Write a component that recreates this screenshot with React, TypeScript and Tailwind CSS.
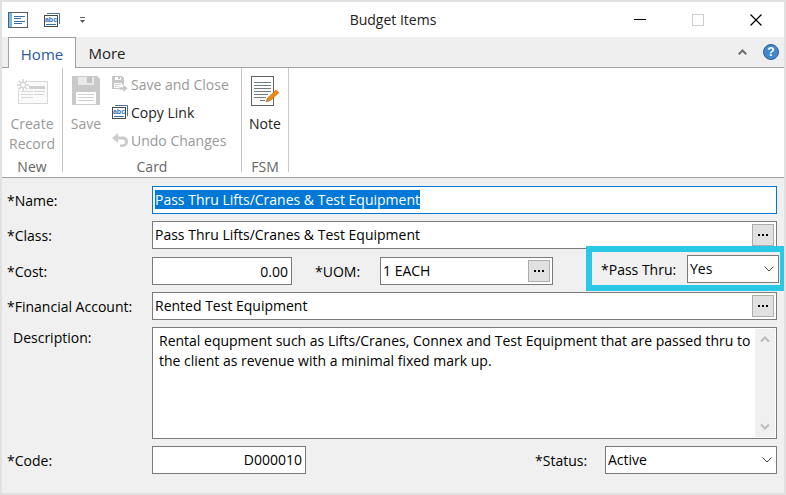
import { useEffect, useRef } from "react";
import type { ReactNode } from "react";

const field = "h-7 min-w-0 border border-[#7a7a7a] bg-white leading-5 text-black outline-none";

const FormIcon = () => (
  <svg width="20" height="16" viewBox="0 0 20 16" aria-hidden="true">
    <rect x="0.5" y="0.5" width="19" height="15" fill="#fff" stroke="#5e5e5e" />
    <rect x="1" y="1" width="3" height="14" fill="#74bfdf" />
    <path d="M6 4.5h11M6 6.5h7M6 9.5h11M6 11.5h8" stroke="#3a6ea5" />
  </svg>
);

const AbcIcon = () => (
  <svg width="16" height="14" viewBox="0 0 16 14" aria-hidden="true">
    <path d="M3 0.5h12.5V11" fill="none" stroke="#4d7297" />
    <rect x="0.5" y="2.5" width="13" height="11" fill="#fff" stroke="#484848" />
    <text x="7" y="9" textAnchor="middle" fontSize="7" fontWeight="700" fontFamily="Liberation Sans, sans-serif" fill="#2f6fb5">abc</text>
    <path d="M2 11.5h10" stroke="#2f6fb5" />
  </svg>
);

const NewRecordIcon = () => (
  <svg width="32" height="30" viewBox="0 0 32 30" aria-hidden="true">
    <rect x="2.5" y="5.5" width="29" height="22" fill="#fafafa" stroke="#d8d8d8" />
    <rect x="13" y="10" width="16" height="3" fill="#d0d0d0" />
    <path d="M5 15.5h12M18 15.5h11M5 18.5h12M18 18.5h10M5 21.5h12" stroke="#d6d6d6" />
    <circle cx="7" cy="9" r="6" fill="#fff" />
    <path d="M7 3v12M1 9h12M2.8 4.8l8.4 8.4M11.2 4.8l-8.4 8.4" stroke="#d2d2d2" strokeWidth="1.5" />
    <circle cx="7" cy="9" r="2.5" fill="#fff" stroke="#d2d2d2" />
  </svg>
);

const SaveIcon = () => (
  <svg width="28" height="30" viewBox="0 0 28 30" aria-hidden="true">
    <path d="M0 0h25l3 3v26H0z" fill="#c9c9c9" />
    <rect x="6" y="1" width="16" height="8" fill="#e9e9e9" />
    <rect x="15" y="1" width="5" height="6" fill="#c4c4c4" />
    <rect x="4" y="16" width="20" height="12" fill="#fff" />
    <path d="M6 18.5h16M6 21.5h16M6 24.5h16" stroke="#cfcfcf" />
  </svg>
);

const SaveCloseIcon = () => (
  <svg width="16" height="16" viewBox="0 0 16 16" aria-hidden="true">
    <path d="M0 0h10l2 2v7H9v4H0z" fill="#c6c6c6" />
    <rect x="3" y="1" width="6" height="3" fill="#fff" />
    <rect x="6" y="1" width="2" height="2" fill="#c6c6c6" />
    <rect x="2" y="7" width="8" height="5" fill="#fff" />
    <path d="M3 8.5h6M3 10.5h4" stroke="#cfcfcf" />
    <path d="M7 11h4V8l5 4.5-5 3.5v-2H7z" fill="#c6c6c6" stroke="#fff" strokeWidth="0.5" />
  </svg>
);

const UndoIcon = () => (
  <svg width="16" height="14" viewBox="0 0 16 14" aria-hidden="true">
    <path d="M0 5l6-5v3.5h4.5c3.500 0 5.500 2 5.500 5S14 14 10 14H8v-2.500h2c2 0 3-1 3-2.500s-1-2.500-3-2.500H6V10z" fill="#cbcbcb" />
  </svg>
);

const NoteIcon = () => (
  <svg width="28" height="30" viewBox="0 0 28 30" aria-hidden="true">
    <rect x="0.5" y="0.5" width="22" height="29" fill="#fdfdfd" stroke="#5d6366" />
    <path d="M3 6.5h17M3 9.5h17M3 12.5h17M3 15.5h17M3 18.5h14M3 21.5h12M9 24.5h5" stroke="#6f7e80" />
    <path d="M15 26l1.500-4 8.500-8 3 2.500-8.500 8z" fill="#f08c0a" stroke="#a85f10" strokeWidth="0.5" />
    <path d="M15 26l1.500-4 2.500 2.500z" fill="#b98a55" />
  </svg>
);

const Chevron = () => (
  <svg className="pointer-events-none absolute right-[5px] top-[11px]" width="10" height="6" viewBox="0 0 10 6" fill="none" aria-hidden="true">
    <path d="M0.5 0.5L5 5l4.5-4.5" stroke="#444" />
  </svg>
);

const ScrollArrow = ({ d }: { d: string }) => (
  <svg width="10" height="8" viewBox="0 0 10 8" fill="none" aria-hidden="true">
    <path d={d} stroke="#bdbdbd" strokeWidth="2" />
  </svg>
);

const Group = ({ label, className, children }: { label: string; className: string; children: ReactNode }) => (
  <div className={`flex h-[104px] flex-col border-r border-[#c6c6c6] pt-[2px] ${className}`}>
    <div className="flex h-[84px] shrink-0 items-start">{children}</div>
    <div className="mt-[7px] text-center leading-3 text-[#666]">{label}</div>
  </div>
);

const LargeButton = ({ icon, disabled, children }: { icon: ReactNode; disabled?: boolean; children: ReactNode }) => (
  <button disabled={disabled} className="flex w-full flex-col items-center gap-2 pt-[6px] leading-5 text-[#222] disabled:text-[#999]">
    {icon}
    <span>{children}</span>
  </button>
);

const SmallButton = ({ icon, disabled, children }: { icon: ReactNode; disabled?: boolean; children: ReactNode }) => (
  <button disabled={disabled} className="flex h-7 items-center gap-[3px] whitespace-nowrap text-[#222] disabled:text-[#999]">
    {icon}
    {children}
  </button>
);

const Label = ({ htmlFor, children }: { htmlFor: string; children: ReactNode }) => (
  <label htmlFor={htmlFor} className="w-[145px] shrink-0">
    {children}
  </label>
);

const Lookup = ({ id, value, className }: { id: string; value: string; className: string }) => (
  <div className={`flex items-center pr-[2px] ${field} ${className}`}>
    <input id={id} defaultValue={value} className="min-w-0 flex-1 pl-[2px] outline-none" />
    <button type="button" aria-label={`Browse ${id}`} className="flex h-[22px] w-[22px] items-center justify-center border border-[#adadad] bg-[#e1e1e1]">
      <svg width="10" height="2" viewBox="0 0 10 2" aria-hidden="true">
        <path d="M0 1h2M4 1h2M8 1h2" stroke="#000" strokeWidth="2" />
      </svg>
    </button>
  </div>
);

const Picker = ({ id, options, className }: { id: string; options: string[]; className: string }) => (
  <div className={`relative ${className}`}>
    <select id={id} className={`w-full appearance-none pl-[2px] ${field}`}>
      {options.map((o) => (
        <option key={o}>{o}</option>
      ))}
    </select>
    <Chevron />
  </div>
);

export default function App() {
  const nameRef = useRef<HTMLInputElement>(null);

  useEffect(() => {
    nameRef.current?.focus();
    nameRef.current?.select();
  }, []);

  return (
    <div className="min-h-screen overflow-hidden border-2 border-[#e1e1e1] bg-[#f0f0f0] font-['Open_Sans','Noto_Sans',sans-serif] text-[14px] text-black">
      <header className="grid h-[35px] grid-cols-[1fr_auto_1fr] items-center bg-white">
        <div className="flex items-center pl-[6px]">
          <button aria-label="Form" className="mr-4"><FormIcon /></button>
          <button aria-label="Copy link" className="mr-5"><AbcIcon /></button>
          <button aria-label="Customize toolbar">
            <svg width="5" height="6" viewBox="0 0 5 6" aria-hidden="true">
              <path d="M0 0.5h5" stroke="#666" />
              <path d="M0 3h5L2.5 6z" fill="#555" />
            </svg>
          </button>
        </div>
        <h1 className="text-[#222]">Budget Items</h1>
        <div className="flex items-center justify-end gap-[46px] pr-[22px]">
          <button aria-label="Minimize">
            <svg width="12" height="12" viewBox="0 0 12 12" aria-hidden="true"><path d="M0 5.5h12" stroke="#000" /></svg>
          </button>
          <button aria-label="Maximize">
            <svg width="12" height="12" viewBox="0 0 12 12" aria-hidden="true"><rect x="0.5" y="0.5" width="11" height="11" fill="none" stroke="#ccc" /></svg>
          </button>
          <button aria-label="Close">
            <svg width="12" height="12" viewBox="0 0 12 12" aria-hidden="true"><path d="M0.5 0.5l11 11M11.5 0.5l-11 11" stroke="#000" strokeWidth="1.2" /></svg>
          </button>
        </div>
      </header>

      <nav className="flex h-[31px] items-stretch border-b border-[#a0a0a0] bg-[#efefef] pl-[6px]">
        <button className="-mb-px w-[68px] border border-b-0 border-[#a0a0a0] bg-white pt-0.5 text-[15px] text-[#2b579a]">Home</button>
        <button className="w-[62px] pt-0.5 text-[15px] text-[#222]">More</button>
        <div className="ml-auto flex items-center gap-4 pr-[5px]">
          <button aria-label="Collapse ribbon">
            <svg width="9" height="6" viewBox="0 0 9 6" fill="none" aria-hidden="true"><path d="M0.7 5.3L4.5 1.5l3.8 3.8" stroke="#6d6d6d" strokeWidth="2" /></svg>
          </button>
          <button aria-label="Help">
            <svg width="16" height="16" viewBox="0 0 16 16" aria-hidden="true">
              <circle cx="8" cy="8" r="7.5" fill="#4488cc" stroke="#2c5f96" />
              <text x="8" y="12" textAnchor="middle" fontSize="12" fontWeight="700" fontFamily="Liberation Sans, sans-serif" fill="#fff">?</text>
            </svg>
          </button>
        </div>
      </nav>

      <section className="flex h-[110px] border-b border-[#a0a0a0] bg-white">
        <Group label="New" className="w-[61px]">
          <LargeButton disabled icon={<NewRecordIcon />}>Create Record</LargeButton>
        </Group>
        <Group label="Card" className="w-[179px]">
          <div className="ml-px w-11 shrink-0">
            <LargeButton disabled icon={<SaveIcon />}>Save</LargeButton>
          </div>
          <div className="ml-1">
            <SmallButton disabled icon={<SaveCloseIcon />}>Save and Close</SmallButton>
            <SmallButton icon={<AbcIcon />}>Copy Link</SmallButton>
            <SmallButton disabled icon={<UndoIcon />}>Undo Changes</SmallButton>
          </div>
        </Group>
        <Group label="FSM" className="w-[47px]">
          <LargeButton icon={<NoteIcon />}>Note</LargeButton>
        </Group>
      </section>

      <form className="flex flex-col gap-[7px] pb-[19px] pl-[5px] pr-[7px] pt-2">
        <div className="flex items-center">
          <Label htmlFor="name">*Name:</Label>
          <input
            id="name"
            ref={nameRef}
            defaultValue="Pass Thru Lifts/Cranes & Test Equipment"
            className="h-7 min-w-0 flex-1 border border-[#0078d7] bg-white pb-0.5 pl-[2px] leading-5 outline-none selection:bg-[#0078d7] selection:text-white"
          />
        </div>
        <div className="flex items-center">
          <Label htmlFor="class">*Class:</Label>
          <Lookup id="class" value="Pass Thru Lifts/Cranes & Test Equipment" className="flex-1" />
        </div>
        <div className="relative flex h-[29px] items-end">
          <div className="flex items-center">
            <Label htmlFor="cost">*Cost:</Label>
            <input id="cost" defaultValue="0.00" className={`w-[140px] pr-[3px] text-right ${field}`} />
            <label htmlFor="uom" className="w-[88px] pl-[23px]">*UOM:</label>
            <Lookup id="uom" value="1 EACH" className="w-[173px]" />
          </div>
          {/* highlight frame sits over the neighbouring rows */}
          <div className="absolute -right-[9px] -top-[10px] flex h-[45px] w-[200px] items-center border-[6px] border-[#29c8e4] bg-[#f0f0f0] pl-[9px] pr-px">
            <label htmlFor="passThru" className="flex-1 whitespace-nowrap pt-0.5">*Pass Thru:</label>
            <Picker id="passThru" options={["Yes", "No"]} className="w-[92px]" />
          </div>
        </div>
        <div className="flex items-center">
          <Label htmlFor="account">*Financial Account:</Label>
          <Lookup id="account" value="Rented Test Equipment" className="flex-1" />
        </div>
        <div className="flex items-start">
          <label htmlFor="description" className="w-[145px] shrink-0 pl-[6px]">Description:</label>
          <div className="flex h-28 min-w-0 flex-1 border border-[#7a7a7a] bg-white py-px pr-px">
            <textarea
              id="description"
              defaultValue="Rental equpment such as Lifts/Cranes, Connex and Test Equipment that are passed thru to the client as revenue with a minimal fixed mark up."
              className="min-w-0 flex-1 resize-none overflow-hidden pl-[6px] pt-[2px] leading-5 outline-none"
            />
            <div className="flex w-5 flex-col items-center justify-between bg-[#f0f0f0] py-[6px]">
              <ScrollArrow d="M1 6.5L5 2.5l4 4" />
              <ScrollArrow d="M1 1.5l4 4 4-4" />
            </div>
          </div>
        </div>
        <div className="flex items-center">
          <Label htmlFor="code">*Code:</Label>
          <input id="code" defaultValue="D000010" className={`w-[154px] pb-0.5 pr-[3px] text-right ${field}`} />
          <label htmlFor="status" className="ml-auto w-[70px]">*Status:</label>
          <Picker id="status" options={["Active", "Inactive"]} className="w-[172px]" />
        </div>
      </form>
    </div>
  );
}
